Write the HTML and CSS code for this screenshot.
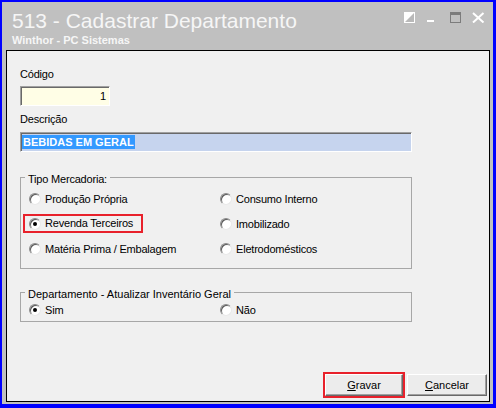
FILE: index.html
```html
<!DOCTYPE html>
<html lang="pt-BR">
<head>
<meta charset="utf-8">
<title>513 - Cadastrar Departamento</title>
<link rel="stylesheet" href="styles.css">
</head>
<body>
<div class="window">
  <header class="titlebar">
    <div class="titles">
      <div class="title">513 - Cadastrar Departamento</div>
      <div class="subtitle">Winthor - PC Sistemas</div>
    </div>
    <svg class="controls" width="81" height="11" viewBox="0 0 81 11" aria-hidden="true">
      <rect x="0" y="0" width="11" height="11" fill="#ffffff"/>
      <polygon points="10,1 10,10 1,10" fill="#b9b9b9"/>
      <rect x="23" y="8" width="7" height="2" fill="#ffffff"/>
      <rect x="46.5" y="0.5" width="10" height="10" fill="none" stroke="#7c7c7c"/>
      <rect x="46" y="0" width="11" height="3" fill="#7c7c7c"/>
      <path d="M69 1 L79.5 10.5 M79.5 1 L69 10.5" stroke="#ffffff" stroke-width="2" fill="none"/>
    </svg>
  </header>
  <main class="panel">
    <div class="lbl lbl-code">Código</div>
    <div class="input code">1</div>
    <div class="lbl lbl-desc">Descrição</div>
    <div class="input desc"><span class="sel">BEBIDAS EM GERAL</span></div>

    <section class="group g1">
      <span class="legend">Tipo Mercadoria:</span>
      <div class="grid">
        <div class="opt"><span class="rb"></span>Produção Própria</div>
        <div class="opt"><span class="rb"></span>Consumo Interno</div>
        <div class="opt"><span class="mark"><span class="rb on"></span>Revenda Terceiros</span></div>
        <div class="opt"><span class="rb"></span>Imobilizado</div>
        <div class="opt"><span class="rb"></span>Matéria Prima / Embalagem</div>
        <div class="opt"><span class="rb"></span>Eletrodomésticos</div>
      </div>
    </section>

    <section class="group g2">
      <span class="legend">Departamento - Atualizar Inventário Geral</span>
      <div class="grid">
        <div class="opt"><span class="rb on"></span>Sim</div>
        <div class="opt"><span class="rb"></span>Não</div>
      </div>
    </section>

    <div class="buttons">
      <span class="hl"><button class="btn gravar"><u>G</u>ravar</button></span>
      <button class="btn cancelar"><u>C</u>ancelar</button>
    </div>
  </main>
</div>
</body>
</html>
```
FILE: styles.css
```css
* { box-sizing: border-box; }
html, body { margin: 0; padding: 0; }
body {
  width: 496px;
  height: 408px;
  overflow: hidden;
  font-family: "Liberation Sans", Arial, sans-serif;
  font-size: 11px;
  letter-spacing: -0.2px;
  color: #000;
}
.window {
  width: 496px;
  height: 408px;
  background: #c0c0c0;
  border-style: solid;
  border-color: #0000ff;
  border-width: 2px 3px 4px 2px;
  padding: 0 3px 2px 4px;
  display: flex;
  flex-direction: column;
}
.titlebar {
  height: 48px;
  flex: none;
  display: flex;
  justify-content: space-between;
  align-items: flex-start;
  padding: 0 5px 0 6px;
}
.title {
  margin-top: 6px;
  font-size: 21px;
  line-height: 25px;
  letter-spacing: 0;
  color: #f6f6f6;
  white-space: nowrap;
}
.subtitle {
  margin-top: 1px;
  font-size: 11px;
  line-height: 13px;
  letter-spacing: 0;
  font-weight: bold;
  color: #f6f6f6;
}
.controls { margin-top: 10px; display: block; }
.panel {
  flex: 1;
  background: #f0f0f0;
  border: 1px solid #000;
  padding: 17px 0 0 13px;
  display: flex;
  flex-direction: column;
  align-items: flex-start;
}
.lbl { line-height: 13px; }
.lbl-desc { margin-top: 7px; }
.input {
  height: 20px;
  border-style: solid;
  border-width: 1px;
  border-color: #a0a0a0 #ffffff #ffffff #a0a0a0;
  box-shadow: inset 1px 1px 0 #696969;
  line-height: 18px;
}
.code {
  margin-top: 5px;
  width: 90px;
  background: #fffee6;
  text-align: right;
  padding-right: 3px;
}
.desc {
  margin-top: 6px;
  width: 392px;
  background: #c6d4ee;
  padding: 2px 0 0 1px;
}
.sel {
  display: inline-block;
  vertical-align: top;
  background: #3399ff;
  color: #fff;
  font-weight: bold;
  letter-spacing: 0;
  line-height: 14px;
  padding: 0 1px 0 1px;
}
.group {
  width: 392px;
  border: 1px solid #a7a7a7;
  display: flex;
  flex-direction: column;
}
.g1 { margin-top: 25px; padding-bottom: 7px; }
.g2 { margin-top: 23px; padding-bottom: 3px; }
.legend {
  align-self: flex-start;
  margin: -5px 0 0 4px;
  padding: 0 3px;
  line-height: 13px;
  background: #f0f0f0;
}
.g2 .legend { letter-spacing: 0; }
.grid {
  display: grid;
  grid-template-columns: 191px 1fr;
  padding-left: 8px;
}
.g1 .opt { height: 25px; }
.g2 .opt { height: 17px; }
.opt {
  display: flex;
  align-items: center;
  gap: 4px;
  white-space: nowrap;
}
.mark {
  position: relative;
  display: inline-flex;
  align-items: center;
  gap: 4px;
  line-height: 13px;
}
.mark::after {
  content: "";
  position: absolute;
  top: -3px;
  bottom: -3px;
  left: -6px;
  right: -10px;
  border: 2px solid #e8212b;
}
.rb {
  flex: none;
  position: relative;
  width: 12px;
  height: 12px;
  border-radius: 50%;
  background: #fff;
  border: 1px solid;
  border-color: #8a8a8a #e8e8e8 #e8e8e8 #8a8a8a;
  box-shadow: inset 1px 1px 0 #5a5a5a;
}
.rb.on::after {
  content: "";
  position: absolute;
  left: 3px;
  top: 3px;
  width: 4px;
  height: 4px;
  border-radius: 50%;
  background: #000;
}
.buttons {
  margin-top: auto;
  align-self: stretch;
  display: flex;
  justify-content: flex-end;
  align-items: center;
  gap: 2px;
  padding-right: 2px;
  margin-bottom: 3px;
}
.hl {
  display: block;
  border: 2px solid #e8212b;
}
.btn {
  display: block;
  height: 22px;
  margin: 0;
  padding: 0;
  font-family: "Liberation Sans", Arial, sans-serif;
  font-size: 11px;
  color: #000;
  background: #ececec;
  border: 1px solid;
  border-color: #ffffff #696969 #696969 #ffffff;
  box-shadow: inset -1px -1px 0 #a0a0a0;
}
.gravar { width: 78px; }
.cancelar { width: 80px; }
```
